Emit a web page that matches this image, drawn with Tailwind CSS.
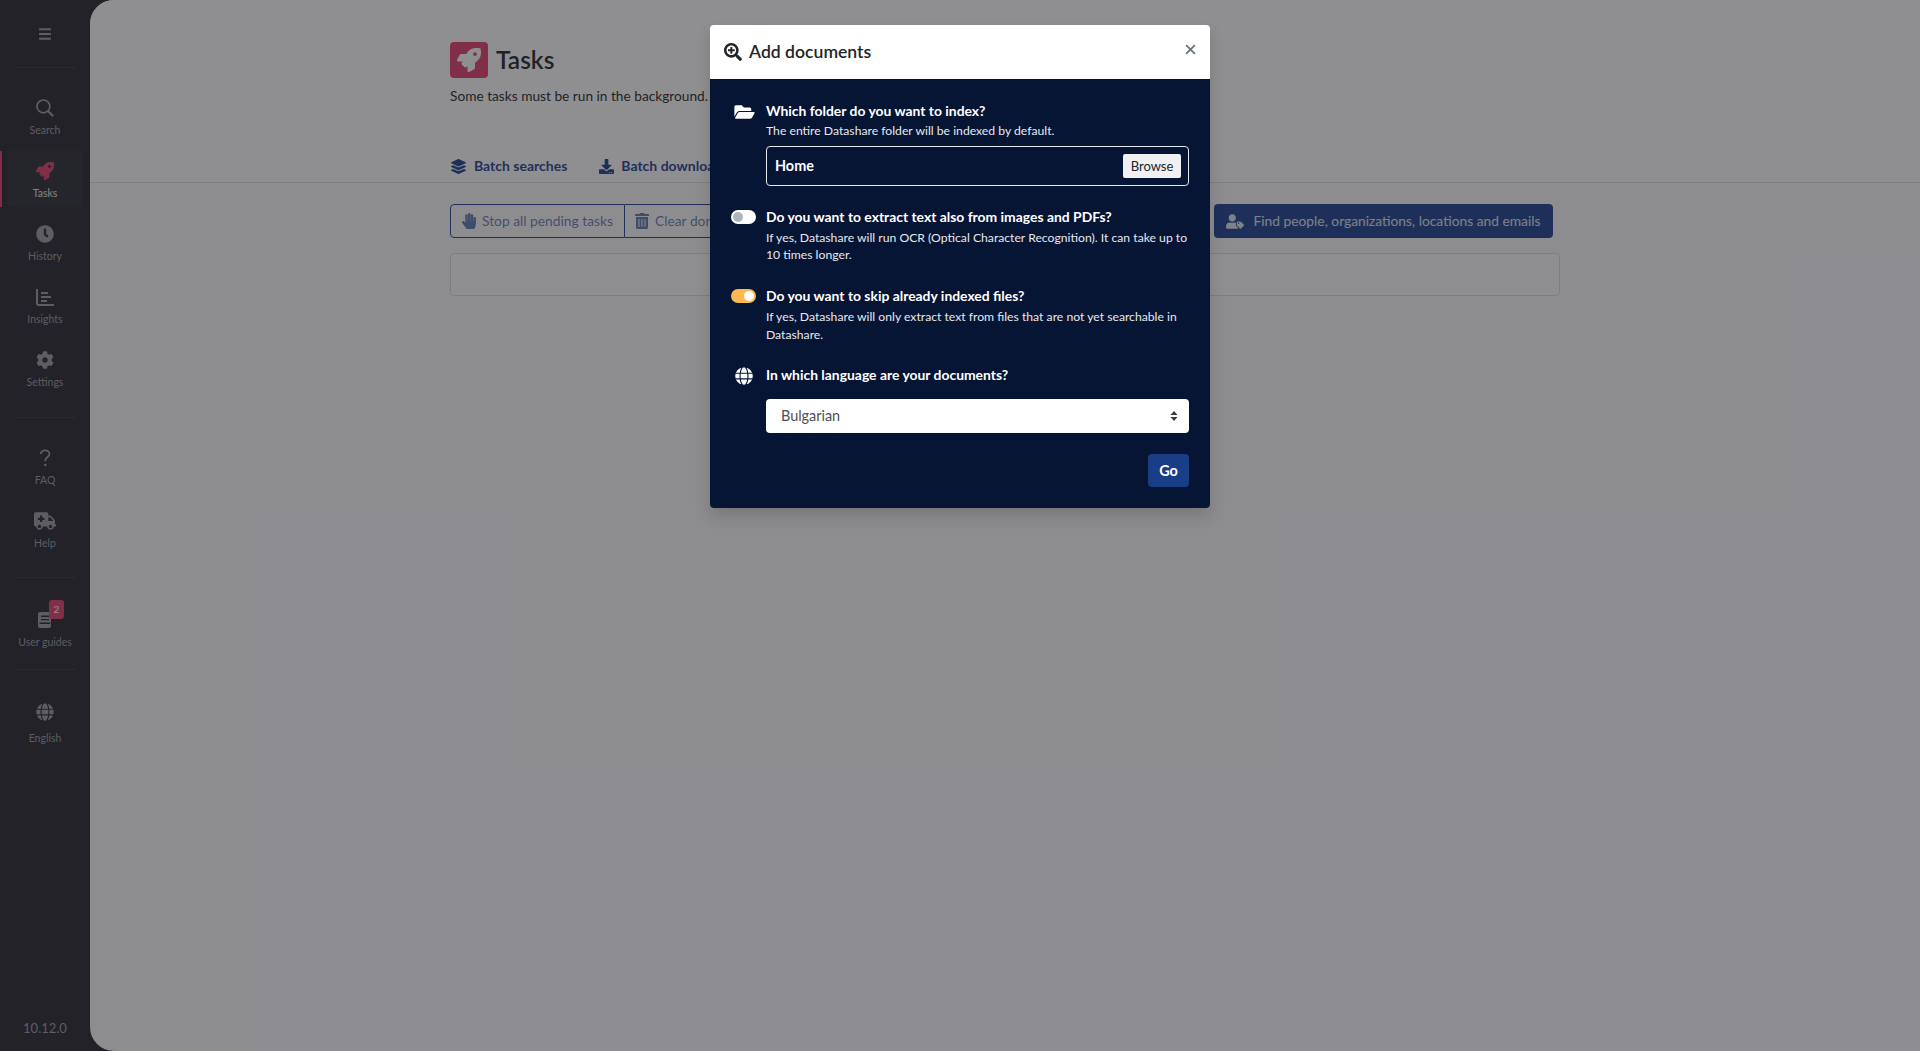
<!doctype html>
<html lang="en">
<head>
<meta charset="utf-8">
<title>Tasks</title>
<script src="https://cdn.jsdelivr.net/npm/@tailwindcss/browser@4"></script>
</head>
<body class="font-['Lato',sans-serif] bg-[#23232b] h-[1051px] overflow-hidden relative text-[#212529]">
<div class="flex h-[1051px]">
  <!-- sidebar -->
  <aside class="w-[90px] shrink-0 bg-[#24242d] flex flex-col relative text-[#9a9aa2]">
    <div class="h-[68px] mx-[14px] border-b border-[#34343c] flex items-center justify-center">
      <svg class="w-[12px] h-[12px]" viewBox="0 0 448 448" fill="currentColor"><rect y="8" width="448" height="80" rx="16"/><rect y="184" width="448" height="80" rx="16"/><rect y="360" width="448" height="80" rx="16"/></svg>
    </div>
    <nav class="flex flex-col gap-[7px] pt-[20px] pb-[21px] mx-[14px] border-b border-[#34343c]">
      <a class="h-[56px] flex flex-col items-center pt-[11px] -mx-[7px] text-[10.5px] leading-[14px]">
        <svg class="w-[18px] h-[18px] mb-[6px]" viewBox="0 0 18 18" fill="none" stroke="currentColor" stroke-width="1.7"><circle cx="7.4" cy="7.4" r="6.4"/><path d="M12 12l5.2 5.2" stroke-width="2.2"/></svg>Search</a>
      <a class="h-[56px] flex flex-col items-center pt-[11px] -mx-[7px] text-[10.5px] leading-[14px] bg-[#2b2b34] rounded-[4px] text-[#e4e4ea] relative">
        <span class="absolute left-[-7px] top-0 bottom-0 w-[2px] bg-[#e23d6e]"></span>
        <svg class="w-[18px] h-[18px] mb-[6px] text-[#e23d6e]" viewBox="0 0 512 512" fill="currentColor"><path d="M505.12019,19.09375c-1.18945-5.53125-6.65819-11-12.207-12.1875C460.716,0,435.507,0,410.40747,0,307.17523,0,245.26909,55.20312,199.05238,128H94.83772c-16.34763.01562-35.55658,11.875-42.88664,26.48438L2.51562,253.29688A28.4,28.4,0,0,0,0,264a24.00867,24.00867,0,0,0,24.00582,24H127.81618l-22.47457,22.46875c-11.36521,11.36133-12.99607,32.25781,0,45.25L156.24582,406.625c11.15623,11.1875,32.15619,13.15625,45.27726,0l22.47457-22.46875V488a24.00867,24.00867,0,0,0,24.00581,24,28.55934,28.55934,0,0,0,10.707-2.51562l98.72834-49.39063c14.62888-7.29687,26.50776-26.5,26.50776-42.85937V312.79688c72.59753-46.3125,128.03493-108.40626,128.03493-211.09376C512.07526,76.5,512.07526,51.29688,505.12019,19.09375ZM384.04033,168A40,40,0,1,1,424.05,128,40.02322,40.02322,0,0,1,384.04033,168Z"/></svg>Tasks</a>
      <a class="h-[56px] flex flex-col items-center pt-[11px] -mx-[7px] text-[10.5px] leading-[14px]">
        <svg class="w-[18px] h-[18px] mb-[6px]" viewBox="0 0 512 512" fill="currentColor"><path d="M256,8C119,8,8,119,8,256S119,504,256,504,504,393,504,256,393,8,256,8Zm92.49,313h0l-20,25a16,16,0,0,1-22.49,2.5h0l-67-49.72a40,40,0,0,1-15-31.23V112a16,16,0,0,1,16-16h32a16,16,0,0,1,16,16V256l58,42.5A16,16,0,0,1,348.49,321Z"/></svg>History</a>
      <a class="h-[56px] flex flex-col items-center pt-[11px] -mx-[7px] text-[10.5px] leading-[14px]">
        <svg class="w-[18px] h-[18px] mb-[6px]" viewBox="0 0 18 18" fill="none" stroke="currentColor"><path d="M1 1v14a2 2 0 0 0 2 2h15" stroke-width="2"/><path d="M5 5h7M5 9h10M5 13h6" stroke-width="1.8"/></svg>Insights</a>
      <a class="h-[56px] flex flex-col items-center pt-[11px] -mx-[7px] text-[10.5px] leading-[14px]">
        <svg class="w-[18px] h-[18px] mb-[6px]" viewBox="0 0 512 512" fill="currentColor"><path d="M487.4 315.7l-42.6-24.6c4.3-23.2 4.3-47 0-70.2l42.6-24.6c4.9-2.8 7.1-8.6 5.5-14-11.1-35.6-30-67.8-54.7-94.6-3.8-4.1-10-5.1-14.8-2.3L380.8 110c-17.9-15.4-38.5-27.3-60.8-35.1V25.8c0-5.6-3.9-10.5-9.4-11.7-36.7-8.2-74.3-7.8-109.2 0-5.5 1.2-9.4 6.1-9.4 11.7V75c-22.2 7.9-42.8 19.8-60.8 35.1L88.7 85.5c-4.9-2.8-11-1.9-14.8 2.3-24.7 26.7-43.6 58.9-54.7 94.6-1.7 5.4.6 11.2 5.5 14L67.3 221c-4.3 23.2-4.3 47 0 70.2l-42.6 24.6c-4.9 2.8-7.1 8.6-5.5 14 11.1 35.6 30 67.8 54.7 94.6 3.8 4.1 10 5.1 14.8 2.3l42.6-24.6c17.9 15.4 38.5 27.3 60.8 35.1v49.2c0 5.6 3.9 10.5 9.4 11.7 36.7 8.2 74.3 7.8 109.2 0 5.5-1.2 9.4-6.1 9.4-11.7v-49.2c22.2-7.9 42.8-19.8 60.8-35.1l42.6 24.6c4.9 2.8 11 1.9 14.8-2.3 24.7-26.7 43.6-58.9 54.7-94.6 1.5-5.5-.7-11.3-5.6-14.1zM256 336c-44.1 0-80-35.9-80-80s35.9-80 80-80 80 35.9 80 80-35.9 80-80 80z"/></svg>Settings</a>
    </nav>
    <nav class="flex flex-col gap-[7px] pt-[20px] pb-[20px] mx-[14px] border-b border-[#34343c]">
      <a class="h-[56px] flex flex-col items-center pt-[11px] -mx-[7px] text-[10.5px] leading-[14px]">
        <svg class="w-[18px] h-[18px] mb-[6px]" viewBox="0 0 18 18" fill="none" stroke="currentColor" stroke-width="1.8"><path d="M4.600 5.200C5 2.800 7 1.400 9.200 1.400c2.400 0 4.300 1.500 4.300 3.600 0 2.800-3.900 3.200-4.200 6.400v.8"/><circle cx="9.300" cy="16" r="1.300" fill="currentColor" stroke="none"/></svg>FAQ</a>
      <a class="h-[56px] flex flex-col items-center pt-[11px] -mx-[7px] text-[10.5px] leading-[14px]">
        <svg class="w-[22px] h-[18px] mb-[6px]" viewBox="0 0 640 512" fill="currentColor"><path d="M624 352h-16V243.9c0-12.7-5.1-24.9-14.1-33.9L494 110.1c-9-9-21.2-14.1-33.9-14.1H416V48c0-26.5-21.5-48-48-48H48C21.5 0 0 21.5 0 48v320c0 26.5 21.5 48 48 48h16c0 53 43 96 96 96s96-43 96-96h128c0 53 43 96 96 96s96-43 96-96h48c8.8 0 16-7.2 16-16v-32c0-8.8-7.2-16-16-16zM160 464c-26.5 0-48-21.5-48-48s21.5-48 48-48 48 21.5 48 48-21.5 48-48 48zm144-248c0 4.4-3.6 8-8 8h-56v56c0 4.4-3.6 8-8 8h-48c-4.4 0-8-3.6-8-8v-56h-56c-4.4 0-8-3.6-8-8v-48c0-4.4 3.6-8 8-8h56v-56c0-4.4 3.6-8 8-8h48c4.4 0 8 3.6 8 8v56h56c4.4 0 8 3.6 8 8v48zm176 248c-26.5 0-48-21.5-48-48s21.5-48 48-48 48 21.5 48 48-21.5 48-48 48zm80-208H416V144h44.1l99.9 99.9V256z"/></svg>Help</a>
    </nav>
    <div class="pt-[22px] pb-[13px] mx-[14px] border-b border-[#34343c]">
      <a class="h-[56px] flex flex-col items-center pt-[11px] -mx-[7px] text-[10.5px] leading-[14px] relative whitespace-nowrap">
        <span class="absolute left-[42px] top-0 w-[15px] h-[19px] rounded-[3px] bg-[#e23d6e] text-white text-[10px] leading-[19px] text-center">2</span>
        <svg class="w-[18px] h-[18px] mb-[6px]" viewBox="0 0 18 18" fill="currentColor"><path fill-rule="evenodd" d="M4 1h9a2 2 0 0 1 2 2v12a2 2 0 0 1-2 2H4a2 2 0 0 1-2-2V3a2 2 0 0 1 2-2zm1 3.500V6h8V4.500zM5 8v1.300h8V8zm-1.500 3.500V13h11v-1.500z"/></svg>User guides</a>
    </div>
    <div class="pt-[22px] mx-[14px]">
      <a class="h-[56px] flex flex-col items-center pt-[11px] -mx-[7px] text-[10.5px] leading-[14px]">
        <svg class="w-[18px] h-[18px] mb-[10px]" viewBox="0 0 496 512" fill="currentColor"><path d="M336.5 160C322 70.7 287.8 8 248 8s-74 62.7-88.5 152h177zM152 256c0 22.2 1.2 43.5 3.3 64h185.3c2.1-20.5 3.3-41.8 3.3-64s-1.2-43.5-3.3-64H155.3c-2.1 20.5-3.3 41.8-3.3 64zm324.7-96c-28.6-67.9-86.5-120.4-158-141.6 24.4 33.8 41.2 84.7 50 141.6h108zM177.2 18.4C105.8 39.6 47.8 92.1 19.3 160h108c8.7-56.9 25.5-107.8 49.9-141.6zM487.4 192H372.7c2.1 21 3.3 42.5 3.3 64s-1.2 43-3.3 64h114.6c5.5-20.5 8.6-41.8 8.6-64s-3.1-43.5-8.5-64zM120 256c0-21.5 1.2-43 3.3-64H8.6C3.2 212.5 0 233.8 0 256s3.2 43.5 8.6 64h114.6c-2-21-3.2-42.5-3.2-64zm39.5 96c14.5 89.3 48.7 152 88.5 152s74-62.7 88.5-152h-177zm159.3 141.6c71.4-21.2 129.4-73.7 158-141.6h-108c-8.8 56.9-25.6 107.8-50 141.6zM19.3 352c28.6 67.9 86.5 120.4 158 141.6-24.4-33.8-41.2-84.7-50-141.6h-108z"/></svg>English</a>
    </div>
    <div class="mt-auto pb-[14px] text-center text-[13px] leading-[18px]">10.12.0</div>
  </aside>
  <!-- main -->
  <main class="flex-1 bg-[#fbfbfd] rounded-l-[24px] flex flex-col min-w-0">
    <header class="bg-white rounded-tl-[24px] border-b border-[#dcdde0] h-[183px] shrink-0">
      <div class="w-[1110px] mx-auto pt-[42px]">
        <div class="flex items-center gap-[8px] h-[36px]">
          <span class="w-[38px] h-[36px] rounded-[4px] bg-[#e23d6e] flex items-center justify-center">
            <svg class="w-[24px] h-[24px] text-white" viewBox="0 0 512 512" fill="currentColor"><path d="M505.12019,19.09375c-1.18945-5.53125-6.65819-11-12.207-12.1875C460.716,0,435.507,0,410.40747,0,307.17523,0,245.26909,55.20312,199.05238,128H94.83772c-16.34763.01562-35.55658,11.875-42.88664,26.48438L2.51562,253.29688A28.4,28.4,0,0,0,0,264a24.00867,24.00867,0,0,0,24.00582,24H127.81618l-22.47457,22.46875c-11.36521,11.36133-12.99607,32.25781,0,45.25L156.24582,406.625c11.15623,11.1875,32.15619,13.15625,45.27726,0l22.47457-22.46875V488a24.00867,24.00867,0,0,0,24.00581,24,28.55934,28.55934,0,0,0,10.707-2.51562l98.72834-49.39063c14.62888-7.29687,26.50776-26.5,26.50776-42.85937V312.79688c72.59753-46.3125,128.03493-108.40626,128.03493-211.09376C512.07526,76.5,512.07526,51.29688,505.12019,19.09375ZM384.04033,168A40,40,0,1,1,424.05,128,40.02322,40.02322,0,0,1,384.04033,168Z"/></svg>
          </span>
          <h1 class="text-[24.5px] font-semibold leading-[38px]">Tasks</h1>
        </div>
        <p class="text-[13.7px] leading-[22px] mt-[7px]">Some tasks must be run in the background.</p>
        <div class="flex gap-[32px] mt-[48px] text-[14px] font-bold text-[#1d4190] leading-[22px]">
          <a class="flex items-center gap-[8px]"><svg class="w-[15px] h-[15px] ml-px" viewBox="0 0 512 512" fill="currentColor"><path d="M12.41 148.02l232.94 105.67c6.8 3.09 14.49 3.09 21.29 0l232.94-105.67c16.55-7.51 16.55-32.52 0-40.03L266.65 2.31a25.607 25.607 0 0 0-21.29 0L12.41 107.98c-16.55 7.51-16.55 32.53 0 40.04zm487.18 88.28l-58.09-26.33-161.64 73.27c-7.56 3.43-15.59 5.17-23.86 5.17s-16.29-1.74-23.86-5.17L70.51 209.97l-58.1 26.33c-16.55 7.5-16.55 32.5 0 40l232.94 105.59c6.8 3.08 14.49 3.08 21.29 0L499.59 276.3c16.55-7.5 16.55-32.5 0-40zm0 127.8l-57.87-26.23-161.86 73.37c-7.56 3.43-15.59 5.17-23.86 5.17s-16.29-1.74-23.86-5.17L70.29 337.87 12.41 364.1c-16.55 7.5-16.55 32.5 0 40l232.94 105.59c6.8 3.08 14.49 3.08 21.29 0L499.59 404.1c16.55-7.5 16.55-32.5 0-40z"/></svg>Batch searches</a>
          <a class="flex items-center gap-[7px]"><svg class="w-[15px] h-[15px]" viewBox="0 0 512 512" fill="currentColor"><path d="M216 0h80c13.3 0 24 10.7 24 24v168h87.7c17.8 0 26.7 21.5 14.1 34.1L269.7 378.3c-7.5 7.5-19.8 7.5-27.3 0L90.1 226.1c-12.6-12.6-3.7-34.1 14.1-34.1H192V24c0-13.3 10.7-24 24-24zm296 376v112c0 13.3-10.7 24-24 24H24c-13.3 0-24-10.7-24-24V376c0-13.3 10.7-24 24-24h146.7l49 49c20.1 20.1 52.5 20.1 72.6 0l49-49H488c13.3 0 24 10.7 24 24zm-124 88c0-11-9-20-20-20s-20 9-20 20 9 20 20 20 20-9 20-20zm64 0c0-11-9-20-20-20s-20 9-20 20 9 20 20 20 20-9 20-20z"/></svg>Batch downloads</a>
        </div>
      </div>
    </header>
    <section class="w-[1110px] mx-auto pt-[21px]">
      <div class="flex justify-between pr-[7px] h-[34px] text-[13.8px]">
        <div class="flex text-[#1d4190]/70 leading-[36px]">
          <button class="h-[34px] pl-[11px] border border-[#1d4190] rounded-l-[4px] flex items-center gap-[6px] w-[175px] whitespace-nowrap"><svg class="w-[14px] h-[16px] shrink-0" viewBox="0 0 448 512" fill="currentColor"><path d="M408.781 128.007C386.356 127.578 368 146.36 368 168.79V256h-8V79.79c0-22.43-18.356-41.212-40.781-40.783C297.488 39.423 280 57.169 280 79v177h-8V40.79C272 18.36 253.644-.422 231.219.007 209.488.423 192 18.169 192 40v216h-8V80.79c0-22.43-18.356-41.212-40.781-40.783C121.488 40.423 104 58.169 104 80v235.992l-31.648-43.519c-12.993-17.866-38.009-21.817-55.877-8.823-17.865 12.994-21.815 38.01-8.822 55.877l125.601 172.705A48 48 0 0 0 172.073 512h197.59c22.274 0 41.622-15.324 46.724-37.006l26.508-112.66a192.011 192.011 0 0 0 5.104-43.975V168c.001-21.831-17.487-39.577-39.218-39.993z"/></svg>Stop all pending tasks</button>
          <button class="h-[34px] px-[10px] border border-l-0 border-[#1d4190] rounded-r-[4px] flex items-center gap-[6px] whitespace-nowrap"><svg class="w-[14px] h-[16px] shrink-0" viewBox="0 0 448 512" fill="currentColor"><path d="M32 464a48 48 0 0 0 48 48h288a48 48 0 0 0 48-48V128H32zm272-256a16 16 0 0 1 32 0v224a16 16 0 0 1-32 0zm-96 0a16 16 0 0 1 32 0v224a16 16 0 0 1-32 0zm-96 0a16 16 0 0 1 32 0v224a16 16 0 0 1-32 0zM432 32H312l-9.4-18.7A24 24 0 0 0 281.1 0H166.8a23.72 23.72 0 0 0-21.4 13.3L136 32H16A16 16 0 0 0 0 48v32a16 16 0 0 0 16 16h416a16 16 0 0 0 16-16V48a16 16 0 0 0-16-16z"/></svg>Clear done tasks</button>
        </div>
        <button class="h-[34px] w-[339px] rounded-[4px] bg-[#1d4190] text-white/85 flex items-center justify-center gap-[9px] whitespace-nowrap"><svg class="w-[18px] h-[15px]" viewBox="0 0 640 512" fill="currentColor"><path d="M630.6 364.9l-90.3-90.2c-12-12-28.3-18.7-45.3-18.7h-79.3c-17.7 0-32 14.3-32 32v79.2c0 17 6.7 33.2 18.7 45.2l90.3 90.2c12.5 12.5 32.8 12.5 45.3 0l92.5-92.5c12.6-12.5 12.6-32.7.1-45.2zm-182.8-21c-13.3 0-24-10.7-24-24s10.7-24 24-24 24 10.7 24 24c0 13.2-10.7 24-24 24zm-223.8-88c70.7 0 128-57.3 128-128C352 57.3 294.7 0 224 0S96 57.3 96 128c0 70.6 57.3 127.9 128 127.9zm127.8 111.2V294c-12.2-3.6-24.9-6.2-38.2-6.2h-16.7c-22.2 10.2-46.9 16-72.9 16s-50.6-5.8-72.9-16h-16.7C60.2 287.9 0 348.1 0 422.3v41.6c0 26.5 21.5 48 48 48h352c15.5 0 29.1-7.5 37.9-18.9l-58-58c-18.1-18.1-28.1-42.2-28.1-67.9z"/></svg>Find people, organizations, locations and emails</button>
      </div>
      <div class="mt-[15px] h-[43px] bg-white border border-[#dcdde0] rounded-[4px]"></div>
    </section>
  </main>
</div>
<!-- backdrop + modal -->
<div class="absolute inset-0 bg-[#1f1f24]/50 flex justify-center items-start pt-[25px]">
  <div class="w-[500px] h-[483px] rounded-[4px] overflow-hidden shadow-[0_8px_16px_rgba(0,0,0,0.15)] flex flex-col">
    <div class="h-[54px] bg-white flex items-center pl-[14px] pr-[16px] shrink-0">
      <svg class="w-[18px] h-[18px] mr-[7px]" viewBox="0 0 512 512" fill="currentColor"><path d="M304 192v32c0 6.6-5.4 12-12 12h-56v56c0 6.6-5.4 12-12 12h-32c-6.6 0-12-5.4-12-12v-56h-56c-6.6 0-12-5.4-12-12v-32c0-6.6 5.4-12 12-12h56v-56c0-6.6 5.4-12 12-12h32c6.6 0 12 5.4 12 12v56h56c6.6 0 12 5.4 12 12zm201 284.7L476.7 505c-9.4 9.4-24.6 9.4-33.9 0L343 405.3c-4.5-4.5-7-10.6-7-17V372c-35.3 27.6-79.7 44-128 44C93.1 416 0 322.9 0 208S93.1 0 208 0s208 93.1 208 208c0 48.3-16.400 92.7-44 128h16.3c6.4 0 12.5 2.5 17 7l99.7 99.7c9.3 9.4 9.3 24.6 0 34zM344 208c0-75.2-60.8-136-136-136S72 132.8 72 208s60.8 136 136 136 136-60.8 136-136z"/></svg>
      <h2 class="text-[17.6px] font-semibold leading-[26px]">Add documents</h2>
      <svg class="ml-auto mb-[5px] -mr-[2px] w-[11px] h-[11px] text-[#6c757d]" viewBox="0 0 10 10" fill="none" stroke="currentColor" stroke-width="1.7"><path d="M1 1l8 8M9 1l-8 8"/></svg>
    </div>
    <div class="flex-1 bg-[#071535] text-white flex flex-col px-[21px] pt-[22px]">
      <div class="flex">
        <div class="w-[35px] shrink-0 pt-[2px]"><svg class="w-[21px] h-[18px] ml-[3px]" viewBox="0 0 576 512" fill="currentColor"><path d="M572.694 292.093L500.27 416.248A63.997 63.997 0 0 1 444.989 448H45.025c-18.523 0-30.064-20.093-20.731-36.093l72.424-124.155A64 64 0 0 1 152 256h399.964c18.523 0 30.064 20.093 20.73 36.093zM152 224h328v-48c0-26.51-21.49-48-48-48H272l-64-64H48C21.49 64 0 85.49 0 112v278.046l69.077-118.418C86.214 242.25 117.989 224 152 224z"/></svg></div>
        <div class="flex-1 min-w-0">
          <div class="text-[13.9px] font-bold leading-[20px]">Which folder do you want to index?</div>
          <div class="text-[12.2px] leading-[18px] text-[#e6e8ee] mt-[1px]">The entire Datashare folder will be indexed by default.</div>
          <div class="mt-[6px] h-[40px] border border-[#e6e8ee] rounded-[4px] flex items-center justify-between pl-[8px] pr-[7px]">
            <span class="text-[14.4px] font-bold">Home</span>
            <span class="w-[58px] h-[24px] bg-[#f1f1f3] rounded-[2px] text-[#212529] text-[13px] leading-[24px] text-center">Browse</span>
          </div>
        </div>
      </div>
      <div class="flex mt-[21px]">
        <div class="w-[35px] shrink-0 pt-[3px]"><span class="block w-[25px] h-[14px] rounded-full bg-white relative"><span class="absolute left-[2px] top-[2px] w-[10px] h-[10px] rounded-full bg-[#adb5bd]"></span></span></div>
        <div class="flex-1 min-w-0">
          <div class="text-[13.9px] font-bold leading-[20px]">Do you want to extract text also from images and PDFs?</div>
          <div class="text-[12.2px] leading-[17px] text-[#e6e8ee] mt-[2px]">If yes, Datashare will run OCR (Optical Character Recognition). It can take up to 10 times longer.</div>
        </div>
      </div>
      <div class="flex mt-[23px]">
        <div class="w-[35px] shrink-0 pt-[3px]"><span class="block w-[25px] h-[14px] rounded-full bg-[#fdb94f] relative"><span class="absolute right-[2px] top-[2px] w-[10px] h-[10px] rounded-full bg-white"></span></span></div>
        <div class="flex-1 min-w-0">
          <div class="text-[13.9px] font-bold leading-[20px]">Do you want to skip already indexed files?</div>
          <div class="text-[12.2px] leading-[18px] text-[#e6e8ee] mt-[2px]">If yes, Datashare will only extract text from files that are not yet searchable in Datashare.</div>
        </div>
      </div>
      <div class="flex mt-[21px]">
        <div class="w-[35px] shrink-0 pt-[2px]"><svg class="w-[18px] h-[18px] ml-[4px]" viewBox="0 0 496 512" fill="currentColor"><path d="M336.5 160C322 70.7 287.8 8 248 8s-74 62.7-88.5 152h177zM152 256c0 22.2 1.2 43.5 3.3 64h185.3c2.1-20.5 3.3-41.8 3.3-64s-1.2-43.5-3.3-64H155.3c-2.1 20.5-3.3 41.8-3.3 64zm324.7-96c-28.6-67.9-86.5-120.4-158-141.6 24.4 33.8 41.2 84.7 50 141.6h108zM177.2 18.4C105.8 39.6 47.8 92.1 19.3 160h108c8.7-56.9 25.5-107.8 49.9-141.6zM487.4 192H372.7c2.1 21 3.3 42.5 3.3 64s-1.2 43-3.3 64h114.6c5.5-20.5 8.6-41.8 8.6-64s-3.1-43.5-8.5-64zM120 256c0-21.5 1.2-43 3.3-64H8.6C3.2 212.5 0 233.8 0 256s3.2 43.5 8.6 64h114.6c-2-21-3.2-42.5-3.2-64zm39.5 96c14.5 89.3 48.7 152 88.5 152s74-62.7 88.5-152h-177zm159.3 141.6c71.4-21.2 129.4-73.7 158-141.6h-108c-8.8 56.9-25.6 107.8-50 141.6zM19.3 352c28.6 67.9 86.5 120.4 158 141.6-24.4-33.8-41.2-84.7-50-141.6h-108z"/></svg></div>
        <div class="flex-1 min-w-0">
          <div class="text-[13.9px] font-bold leading-[20px]">In which language are your documents?</div>
          <div class="mt-[14px] h-[34px] bg-white rounded-[4px] flex items-center justify-between pl-[15px] pr-[11px] text-[14.4px] text-[#495057]">
            <span>Bulgarian</span>
            <svg class="w-[8px] h-[12px]" viewBox="0 0 8 12" fill="#343a40"><path d="M4 1l3.500 4h-7zM4 11L.5 7h7z"/></svg>
          </div>
        </div>
      </div>
      <div class="flex justify-end mt-[21px]">
        <button class="w-[41px] h-[33px] rounded-[4px] bg-[#193d87] text-[14.4px] font-bold">Go</button>
      </div>
    </div>
  </div>
</div>
</body>
</html>
